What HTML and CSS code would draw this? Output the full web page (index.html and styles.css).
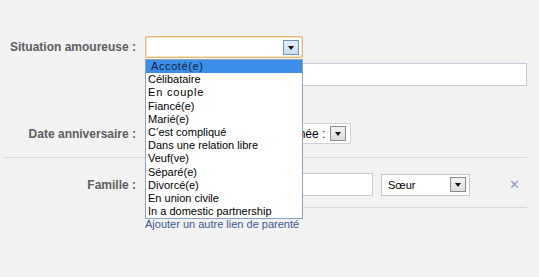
FILE: index.html
```html
<!DOCTYPE html>
<html lang="fr">
  <head>
    <meta charset="UTF-8" />
    <meta name="viewport" content="width=device-width, initial-scale=1.0" />
    <title>Informations de base</title>
    <link rel="stylesheet" href="styles.css">
  </head>
  <body>
    <div class="page">
      <div class="row">
        <div class="label">Situation amoureuse :</div>
        <div class="field">
          <div class="select select-status">
            <span class="value"></span>
            <span class="arrow"></span>
          </div>

          <!-- liste ouverte du select -->
          <ul class="dropdown">
            <li class="selected">Accoté(e)</li>
            <li>Célibataire</li>
            <li class="wide">En couple</li>
            <li>Fiancé(e)</li>
            <li>Marié(e)</li>
            <li>C’est compliqué</li>
            <li>Dans une relation libre</li>
            <li>Veuf(ve)</li>
            <li>Séparé(e)</li>
            <li>Divorcé(e)</li>
            <li>En union civile</li>
            <li>In a domestic partnership</li>
          </ul>
        </div>
      </div>

      <div class="row row-partner">
        <div class="label"></div>
        <div class="field">
          <div class="text-input input-partner"></div>
        </div>
      </div>

      <div class="row row-date">
        <div class="label">Date anniversaire :</div>
        <div class="field date-fields">
          <!-- jour et mois : cachés sous la liste -->
          <div class="select select-day">
            <span class="value"></span>
            <span class="arrow"></span>
          </div>
          <div class="select select-month">
            <span class="value"></span>
            <span class="arrow"></span>
          </div>
          <div class="select select-year">
            <span class="value">Année :</span>
            <span class="arrow"></span>
          </div>
        </div>
      </div>

      <div class="divider"></div>

      <div class="row row-family">
        <div class="label">Famille :</div>
        <div class="field family-fields">
          <div class="text-input input-family"></div>
          <div class="select select-relation">
            <span class="value">Sœur</span>
            <span class="arrow"></span>
          </div>
          <span class="remove">✕</span>
        </div>
      </div>

      <div class="divider divider-field"></div>

      <div class="row row-link">
        <div class="label"></div>
        <div class="field">
          <a class="add-link" href="#">Ajouter un autre lien de parenté</a>
        </div>
      </div>
    </div>
  </body>
</html>
```

FILE: styles.css
```css
body {
  margin: 0;
  background: #f2f2f2;
  font-family: "Liberation Sans", Arial, sans-serif;
  font-size: 11px;
  color: #000;
}

.page {
  width: 527px;
  padding-top: 36px;
}

.row {
  display: grid;
  grid-template-columns: 136px 1fr;
  column-gap: 9px;
  align-items: center;
}

.label {
  text-align: right;
  font-weight: bold;
  font-size: 12px;
  color: #5e5e5e;
}

.field {
  position: relative;
}

/* selects fermés */
.select {
  display: flex;
  align-items: center;
  justify-content: space-between;
  box-sizing: border-box;
  height: 22px;
  padding: 0 3px 0 6px;
  background: #fff;
  border: 1px solid #c3c7cc;
}

.select .value {
  font-size: 11px;
  color: #000;
}

.arrow {
  position: relative;
  box-sizing: border-box;
  width: 16px;
  height: 15px;
  border: 1px solid #8a8a8a;
  background: linear-gradient(#f4f4f4, #dcdcdc);
}

.arrow::after {
  content: "";
  position: absolute;
  left: 4px;
  top: 5px;
  border-left: 3px solid transparent;
  border-right: 3px solid transparent;
  border-top: 4px solid #111;
}

.select-status {
  width: 158px;
  border: 1px solid #e2b96e;
  border-radius: 2px;
  box-shadow: inset 0 0 0 1px #f6e3bd;
}

.select-status .arrow {
  border-color: #6f93c0;
  background: linear-gradient(#e4eefa, #c9dcf3);
}

/* liste déroulante */
.dropdown {
  position: absolute;
  left: 0;
  top: 23px;
  z-index: 5;
  box-sizing: border-box;
  width: 158px;
  margin: 0;
  padding: 0;
  list-style: none;
  background: #fff;
  border: 1px solid #8aa3bf;
}

.dropdown li {
  height: 13.2px;
  line-height: 13px;
  padding-left: 2px;
  white-space: nowrap;
}

.dropdown li.selected {
  padding-left: 5px;
  background: #3b8fe9;
  color: #14233a;
  letter-spacing: 0.6px;
}

.dropdown li.wide {
  letter-spacing: 0.8px;
}

.text-input {
  box-sizing: border-box;
  height: 23px;
  background: #fff;
  border: 1px solid #c5cbd6;
}

.row-partner {
  margin-top: 5px;
}

.input-partner {
  width: 382px;
}

.row-date {
  margin-top: 37px;
}

.date-fields {
  display: flex;
  gap: 6px;
}

.date-fields .select {
  height: 21px;
  padding: 0 4px;
  border-color: #cfd3d8;
}

.select-day {
  width: 60px;
}

.select-month {
  width: 62px;
}

.select-year {
  width: 72px;
}

.select-year .value {
  font-size: 12px;
}

.divider {
  height: 1px;
  margin: 13px 0 0 3px;
  background: #d9d9d9;
}

.row-family {
  margin-top: 15px;
}

.family-fields {
  display: flex;
  align-items: center;
  gap: 8px;
}

.input-family {
  width: 228px;
}

.select-relation {
  width: 89px;
  padding-left: 6px;
}

.remove {
  margin-left: 31px;
  font-size: 13px;
  color: #8b9bb6;
}

.divider-field {
  margin: 11px 0 0 145px;
}

.row-link {
  margin-top: 10px;
}

.add-link {
  font-size: 11px;
  color: #3b5998;
  text-decoration: none;
}
```
